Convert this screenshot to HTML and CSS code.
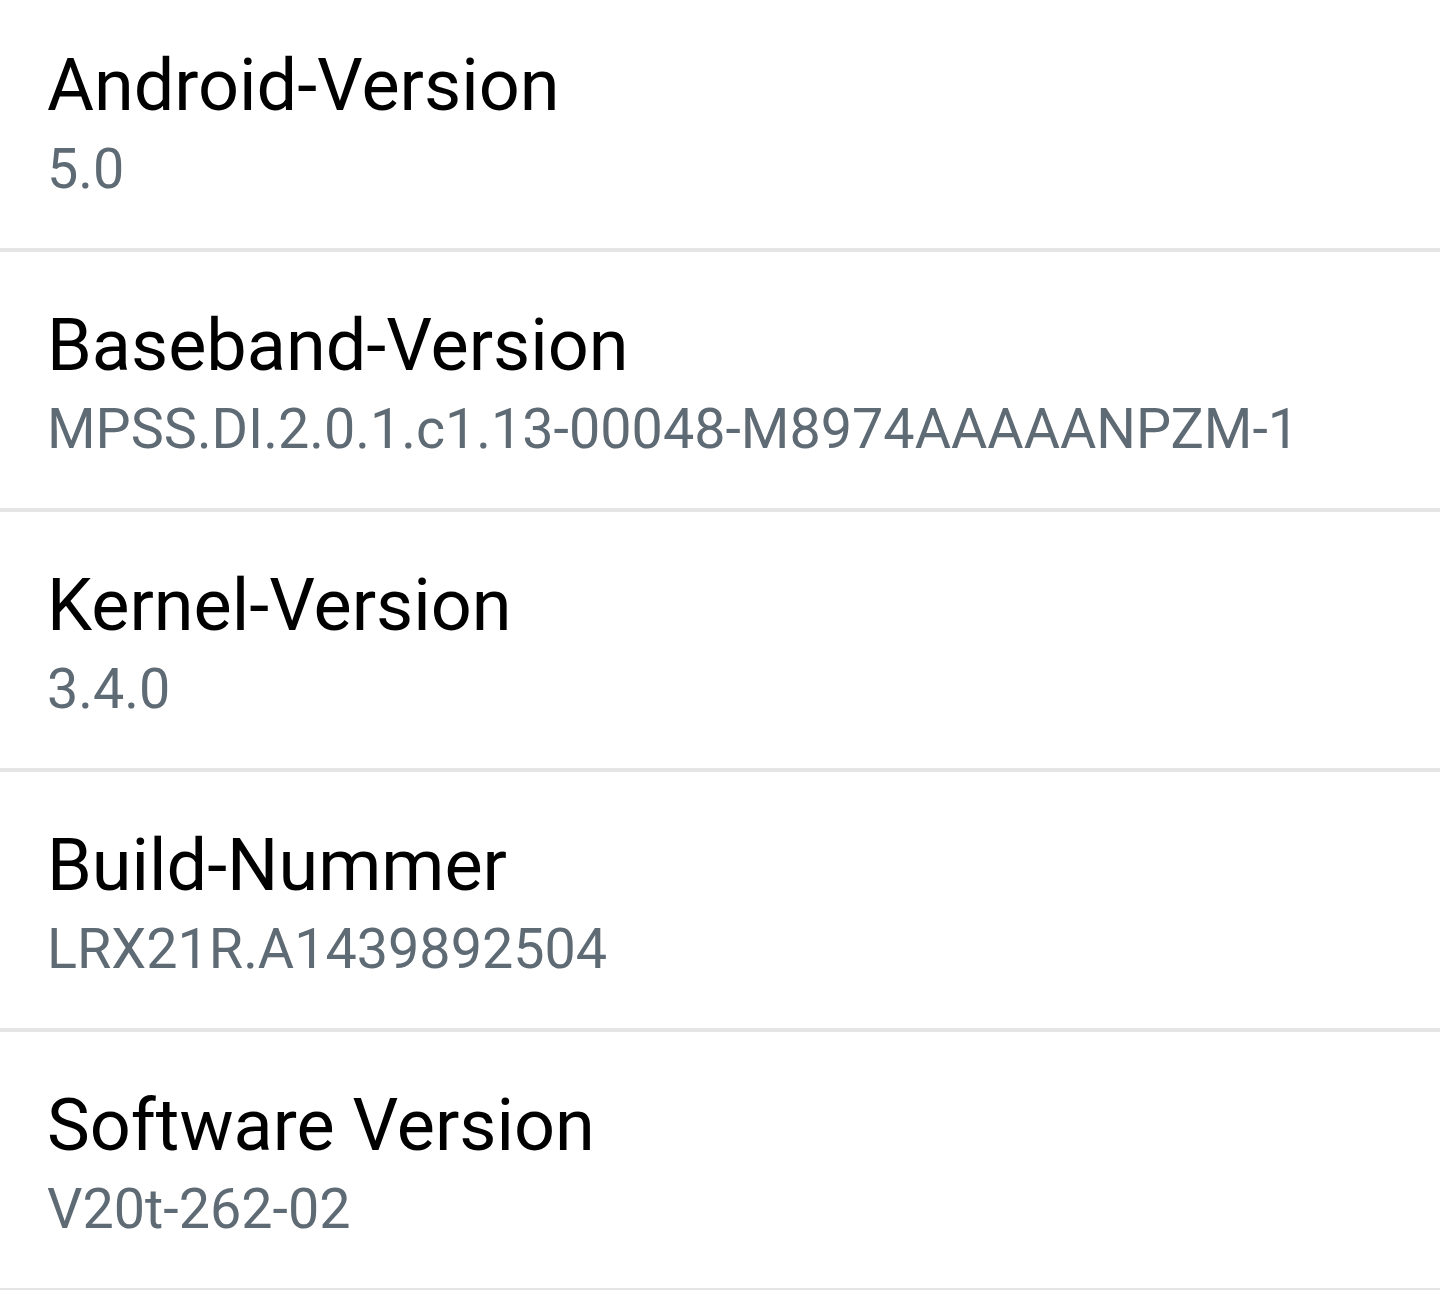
FILE: index.html
```html
<!DOCTYPE html>
<html lang="de">
<head>
  <meta charset="UTF-8" />
  <title>Softwareinformationen</title>
  <link rel="stylesheet" href="styles.css">
</head>
<body>
  <div class="list">
    <div class="item">
      <div class="title">Android-Version</div>
      <div class="summary">5.0</div>
    </div>
    <div class="item">
      <div class="title">Baseband-Version</div>
      <div class="summary">MPSS.DI.2.0.1.c1.13-00048-M8974AAAAANPZM-1</div>
    </div>
    <div class="item">
      <div class="title">Kernel-Version</div>
      <div class="summary">3.4.0</div>
    </div>
    <div class="item">
      <div class="title">Build-Nummer</div>
      <div class="summary">LRX21R.A1439892504</div>
    </div>
    <div class="item">
      <div class="title">Software Version</div>
      <div class="summary">V20t-262-02</div>
    </div>
  </div>
</body>
</html>
```

FILE: styles.css
```css
body {
  margin: 0;
  background: #ffffff;
  font-family: Roboto, 'Noto Sans', sans-serif;
  overflow: hidden;
}

/* list is scrolled a little, first row starts above the top edge */
.list {
  display: flex;
  flex-direction: column;
  margin-top: -8px;
}

.item {
  box-sizing: border-box;
  height: 260px;
  padding: 52px 0 0 47px;
  border-bottom: 4px solid #e5e5e5;
  display: flex;
  flex-direction: column;
}

.title {
  font-size: 72px;
  line-height: 84px;
  color: #000000;
}

.summary {
  margin-top: 5px;
  font-size: 55.7px;
  line-height: 72px;
  color: #5e6a74;
}
```
